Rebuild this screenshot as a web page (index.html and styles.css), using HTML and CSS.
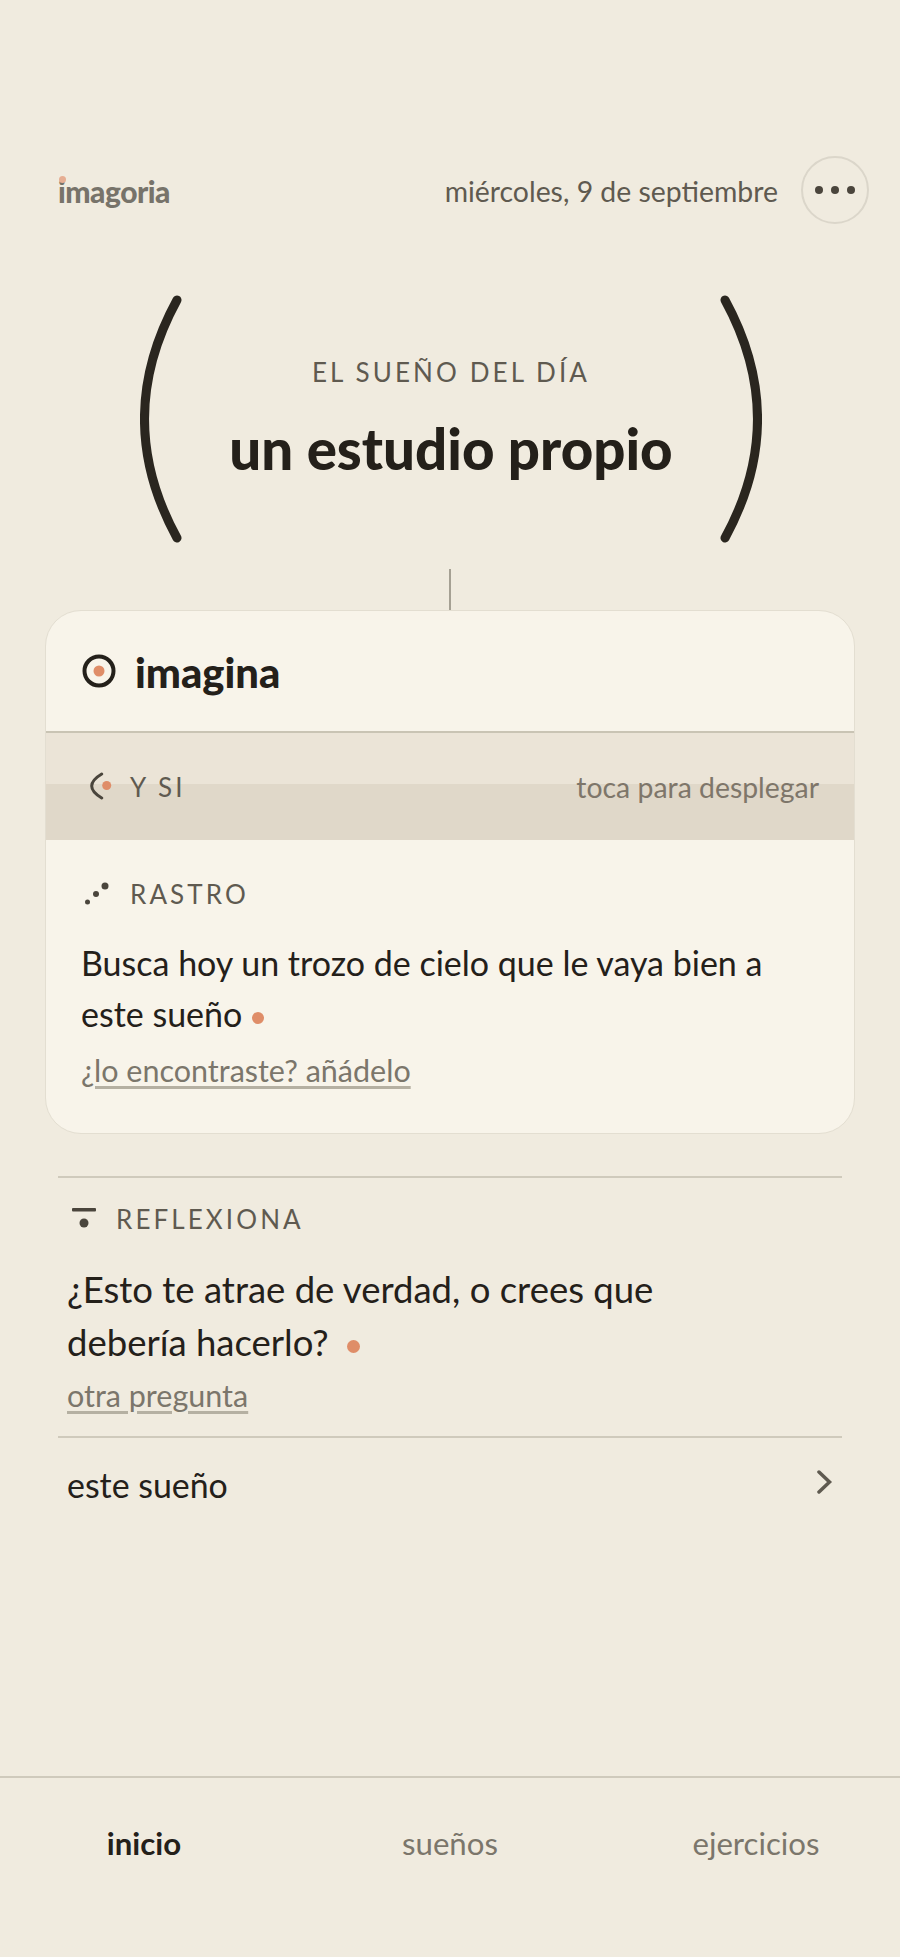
FILE: index.html
```html
<!DOCTYPE html>
<html lang="es">
<head>
  <meta charset="UTF-8" />
  <meta name="viewport" content="width=device-width, initial-scale=1" />
  <title>imagoria</title>
  <link rel="stylesheet" href="styles.css">
</head>
<body>
  <div class="app">
    <header class="top">
      <div class="logo">imagoria</div>
      <div class="date">miércoles, 9 de septiembre</div>
      <button class="menu-btn" aria-label="menú">
        <svg width="44" height="10" viewBox="0 0 44 10"><circle cx="6" cy="5" r="4"/><circle cx="22" cy="5" r="4"/><circle cx="38" cy="5" r="4"/></svg>
      </button>
    </header>

    <section class="hero">
      <svg class="paren" width="42" height="248" viewBox="0 0 42 248"><path d="M37 5Q-28 124 37 243"/></svg>
      <div class="hero-text">
        <p class="hero-kicker">EL SUEÑO DEL DÍA</p>
        <h1>un estudio propio</h1>
      </div>
      <svg class="paren" width="42" height="248" viewBox="0 0 42 248"><path d="M5 5Q70 124 5 243"/></svg>
    </section>
    <div class="stem"></div>

    <section class="card">
      <div class="card-head">
        <svg width="34" height="34" viewBox="0 0 34 34"><circle class="ink-line" cx="17" cy="17" r="14.5"/><circle class="coral" cx="17" cy="17" r="5.5"/></svg>
        <h2>imagina</h2>
      </div>

      <div class="band">
        <div class="label">
          <svg class="icon" width="30" height="30" viewBox="0 0 30 30"><path class="ink-line thin" d="M16.7 2Q-3.3 14 16.7 26"/><circle class="coral" cx="21.7" cy="13.5" r="4.5"/></svg>
          <span>Y SI</span>
        </div>
        <span class="hint">toca para desplegar</span>
      </div>

      <div class="card-body">
        <div class="label">
          <svg class="icon" width="30" height="30" viewBox="0 0 30 30"><circle class="ink" cx="2.5" cy="23" r="2.5"/><circle class="ink" cx="11" cy="15" r="3"/><circle class="ink" cx="20" cy="7" r="3.5"/></svg>
          <span>RASTRO</span>
        </div>
        <p class="prompt">Busca hoy un trozo de cielo que le vaya bien a este sueño <i class="dot"></i></p>
        <a class="link" href="#">¿lo encontraste? añádelo</a>
      </div>
    </section>

    <section class="reflect">
      <div class="label">
        <svg class="icon" width="30" height="30" viewBox="0 0 30 30"><rect class="ink" x="4" y="4" width="24" height="3.5" rx="1"/><circle class="ink" cx="16" cy="19" r="4.5"/></svg>
        <span>REFLEXIONA</span>
      </div>
      <p class="prompt wide">¿Esto te atrae de verdad, o crees que debería hacerlo? <i class="dot"></i></p>
      <a class="link" href="#">otra pregunta</a>
    </section>

    <a class="row" href="#">
      <span>este sueño</span>
      <svg width="16" height="24" viewBox="0 0 16 24"><path d="M2 2L12.5 12L2 22"/></svg>
    </a>

    <nav class="tabs">
      <a class="tab active" href="#">inicio</a>
      <a class="tab" href="#">sueños</a>
      <a class="tab" href="#">ejercicios</a>
    </nav>
  </div>
</body>
</html>
```

FILE: styles.css
```css
* {
  margin: 0;
  padding: 0;
  box-sizing: border-box;
}

body {
  font-family: Lato, "Open Sans", sans-serif;
  background: #f0ebdf;
  color: #24201a;
}

a {
  color: inherit;
  text-decoration: none;
}

.app {
  min-height: 1957px;
  display: flex;
  flex-direction: column;
}

.top {
  display: flex;
  align-items: center;
  padding: 156px 31px 0 58px;
}

.logo {
  position: relative;
  padding-top: 2px;
  font-size: 30px;
  font-weight: 900;
  color: #77736a;
  letter-spacing: -0.5px;
  margin-right: auto;
}

.logo::before {
  content: "";
  position: absolute;
  left: 1px;
  top: 5px;
  width: 7px;
  height: 7px;
  border-radius: 50%;
  background: #e6ae93;
}

.date {
  padding-top: 2px;
  font-size: 28.4px;
  color: #5f5a50;
  margin-right: 23px;
}

.menu-btn {
  width: 68px;
  height: 68px;
  border: 2px solid #dbd6ca;
  border-radius: 50%;
  background: none;
  display: flex;
  align-items: center;
  justify-content: center;
}

.menu-btn circle {
  fill: #4a453c;
}

.hero {
  display: flex;
  align-items: center;
  margin: 71px 138px 0 140px;
}

.paren {
  flex: none;
}

.paren path {
  fill: none;
  stroke: #2a261f;
  stroke-width: 9;
  stroke-linecap: round;
}

.hero-text {
  flex: 1;
  text-align: center;
}

.hero-kicker {
  font-size: 26px;
  letter-spacing: 3.1px;
  color: #5f5a50;
  margin-bottom: 25px;
}

h1 {
  font-size: 56.4px;
  font-weight: 900;
  line-height: 70px;
}

.stem {
  width: 2px;
  height: 41px;
  margin: 26px auto 0;
  background: #a5a093;
}

.card {
  margin: 0 45px;
  background: #f8f4ea;
  border: 1px solid #e3ded1;
  border-radius: 36px;
  overflow: hidden;
}

.card-head {
  display: flex;
  align-items: center;
  gap: 19px;
  height: 122px;
  padding-left: 36px;
  border-bottom: 2px solid #c9c4b4;
}

.card-head h2 {
  margin-top: 2px;
  font-size: 41.7px;
  font-weight: 900;
}

.ink-line {
  fill: none;
  stroke: #24201a;
  stroke-width: 4;
}

.ink-line.thin {
  stroke: #4a453c;
  stroke-width: 3;
  stroke-linecap: round;
}

.coral {
  fill: #df8d68;
}

.ink {
  fill: #4a453c;
}

.band {
  display: flex;
  align-items: center;
  justify-content: space-between;
  height: 107px;
  padding: 0 35px 0 39px;
  background: linear-gradient(#ebe4d7 48%, #e0d8c9 48%);
}

.label {
  display: flex;
  align-items: center;
  gap: 15px;
  font-size: 26px;
  letter-spacing: 3.1px;
  color: #5f5a50;
}

.hint {
  font-size: 28.4px;
  color: #7e766a;
}

.card-body {
  padding: 38px 35px 45px 39px;
}

.prompt {
  font-size: 34px;
  line-height: 51px;
  margin-top: 27px;
}

.card-body .prompt {
  max-width: 700px;
  margin-left: -4px;
}

.dot {
  display: inline-block;
  width: 12px;
  height: 12px;
  margin-left: 1px;
  vertical-align: 3px;
  border-radius: 50%;
  background: #df8d68;
}

.link {
  display: inline-block;
  font-size: 30.5px;
  color: #7b766b;
  text-decoration: underline;
  text-decoration-color: #b5b0a2;
  text-decoration-thickness: 3px;
  text-underline-offset: 4px;
  margin-top: 13px;
}

.card-body .link {
  margin-left: -4px;
}

.reflect {
  margin: 42px 58px 0;
  padding: 25px 0 23px 10px;
  border-top: 2px solid #cfcabc;
  border-bottom: 2px solid #cfcabc;
}

.reflect .label {
  gap: 18px;
}

.prompt.wide {
  width: 640px;
  margin-left: -1px;
  font-size: 36.5px;
  line-height: 53px;
  margin-top: 28px;
}

.prompt.wide .dot {
  width: 13px;
  height: 13px;
  margin-left: 9px;
}

.reflect .link {
  margin-top: 8px;
  margin-left: -1px;
}

.row {
  display: flex;
  align-items: center;
  justify-content: space-between;
  margin: 27px 58px 0;
  padding: 0 9px 0 9px;
  font-size: 33.9px;
}

.row svg {
  margin-bottom: 6px;
}

.row path {
  fill: none;
  stroke: #5f5a50;
  stroke-width: 3.5;
  stroke-linecap: round;
}

.tabs {
  display: grid;
  grid-template-columns: repeat(3, 1fr);
  gap: 18px;
  margin-top: auto;
  height: 181px;
  padding-top: 46px;
  border-top: 2px solid #cfcabc;
  text-align: center;
  font-size: 31.2px;
  color: #7b766b;
}

.tab.active {
  font-weight: 700;
  color: #24201a;
}
```
